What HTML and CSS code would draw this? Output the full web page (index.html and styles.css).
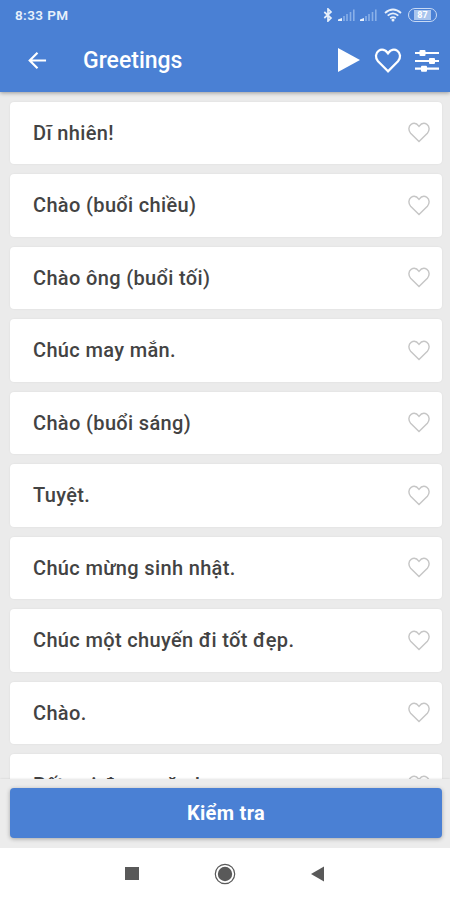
FILE: index.html
```html
<!DOCTYPE html>
<html lang="vi">
<head>
  <meta charset="UTF-8">
  <meta name="viewport" content="width=device-width, initial-scale=1">
  <title>Greetings</title>
  <link rel="stylesheet" href="styles.css">
</head>
<body>

  <svg class="symbols">
    <symbol id="heart" viewBox="0 0 24 22">
      <path d="M12 20.5 L3.2 11.7 C0.6 8.8 0.9 4.4 3.7 2.5 C6.6 0.6 9.8 1.6 12 4.6 C14.2 1.6 17.4 0.6 20.3 2.5 C23.1 4.4 23.4 8.8 20.8 11.7 Z"/>
    </symbol>
    <symbol id="signal" viewBox="0 0 18 14">
      <path d="M0 13 V11.5 L4 10 V13 Z" fill="#e8f0fb"/>
      <path d="M6 13 V8 M9 13 V6 M12.5 13 V4 M15.8 13 V1.5" stroke="#89b0e8" stroke-width="1.6"/>
    </symbol>
  </svg>

  <header class="top">
    <div class="status">
      <span class="time">8:33 PM</span>
      <svg class="bluetooth" viewBox="0 0 10 14"><path d="M1.3 4 L8 10 L5 13 V1 L8 4 L1.3 10"/></svg>
      <svg class="signal"><use href="#signal"/></svg>
      <svg class="signal"><use href="#signal"/></svg>
      <svg class="wifi" viewBox="0 0 18 14">
        <path d="M1 5 Q9 -2 17 5 M3.7 7.7 Q9 3 14.3 7.7 M6.2 10.2 Q9 8 11.8 10.2"/>
        <circle cx="9" cy="12" r="1.5"/>
      </svg>
      <span class="battery"><b>87</b></span>
    </div>
    <nav class="toolbar">
      <svg class="back" viewBox="0 0 20 20"><path d="M19 10 H2 M10 1.8 L1.8 10 L10 18.2"/></svg>
      <h1>Greetings</h1>
      <svg class="play" viewBox="0 0 22 24"><path d="M0 0 L22 12 L0 24 Z"/></svg>
      <svg class="heart"><use href="#heart"/></svg>
      <svg class="sliders" viewBox="0 0 24 22">
        <path d="M0 3 H24 M0 11 H24 M0 18.7 H24"/>
        <rect x="4.5" y="0" width="6" height="6" rx="1"/>
        <rect x="14" y="8" width="6" height="6" rx="1"/>
        <rect x="6" y="15.7" width="6" height="6" rx="1"/>
      </svg>
    </nav>
  </header>

  <main class="list">
    <div class="card"><span>Dĩ nhiên!</span><svg class="like"><use href="#heart"/></svg></div>
    <div class="card"><span>Chào (buổi chiều)</span><svg class="like"><use href="#heart"/></svg></div>
    <div class="card"><span>Chào ông (buổi tối)</span><svg class="like"><use href="#heart"/></svg></div>
    <div class="card"><span>Chúc may mắn.</span><svg class="like"><use href="#heart"/></svg></div>
    <div class="card"><span>Chào (buổi sáng)</span><svg class="like"><use href="#heart"/></svg></div>
    <div class="card"><span>Tuyệt.</span><svg class="like"><use href="#heart"/></svg></div>
    <div class="card"><span>Chúc mừng sinh nhật.</span><svg class="like"><use href="#heart"/></svg></div>
    <div class="card"><span>Chúc một chuyến đi tốt đẹp.</span><svg class="like"><use href="#heart"/></svg></div>
    <div class="card"><span>Chào.</span><svg class="like"><use href="#heart"/></svg></div>
    <div class="card"><span>Rất vui được gặp bạn.</span><svg class="like"><use href="#heart"/></svg></div>
  </main>

  <footer class="bottom">
    <button class="check">Kiểm tra</button>
  </footer>

  <div class="system">
    <svg viewBox="0 0 22 22"><rect x="4" y="4" width="14" height="13"/></svg>
    <svg viewBox="0 0 22 22"><circle class="ring" cx="11" cy="11" r="9.7"/><circle cx="11" cy="11" r="7.2"/></svg>
    <svg viewBox="0 0 22 22"><path d="M4 11 L17 3.5 V18.5 Z"/></svg>
  </div>

</body>
</html>
```

FILE: styles.css
```css
* {
  box-sizing: border-box;
}
body {
  margin: 0;
  height: 900px;
  display: flex;
  flex-direction: column;
  overflow: hidden;
  background: #ebebeb;
  font-family: Roboto, "Noto Sans", sans-serif;
}
.symbols {
  display: none;
}
.top {
  height: 92px;
  flex: none;
  background: #4a80d4;
  color: #fff;
  box-shadow: 0 1px 4px rgba(0, 0, 0, 0.35);
  z-index: 1;
}
.status {
  height: 28px;
  padding: 1px 13px 0 15px;
  display: flex;
  align-items: center;
  color: #e8f0fb;
}
.time {
  flex: 1;
  font-size: 13.5px;
  font-weight: 600;
  letter-spacing: 0.4px;
}
.bluetooth {
  width: 10px;
  height: 14px;
  margin-right: 5px;
  fill: none;
  stroke: #e8f0fb;
  stroke-width: 1.7;
}
.signal {
  width: 18px;
  height: 14px;
  margin-right: 4px;
}
.wifi {
  width: 18px;
  height: 14px;
  margin: 0 6px 0 2px;
  fill: none;
  stroke: #e8f0fb;
  stroke-width: 1.8;
}
.wifi circle {
  fill: #e8f0fb;
  stroke: none;
}
.battery {
  width: 29px;
  height: 14px;
  padding: 1px 5px;
  border: 1.5px solid #c8daf5;
  border-radius: 7px;
  display: flex;
}
.battery b {
  flex: 1;
  background: #a9c5ee;
  color: #fff;
  font-size: 9px;
  line-height: 10px;
  text-align: center;
}
.toolbar {
  height: 64px;
  padding: 0 11px 0 28px;
  display: flex;
  align-items: center;
}
.back {
  width: 19px;
  height: 19px;
  margin-right: 36px;
  fill: none;
  stroke: #fff;
  stroke-width: 2.3;
}
h1 {
  flex: 1;
  margin: 0;
  font-size: 23px;
  font-weight: 500;
}
.play {
  width: 22px;
  height: 24px;
  margin-right: 14px;
  fill: #fff;
}
.heart {
  width: 28px;
  height: 25px;
  margin-right: 13px;
  fill: none;
  stroke: #fff;
  stroke-width: 2;
}
.sliders {
  width: 24px;
  height: 22px;
  margin-top: 2px;
  fill: #fff;
  stroke: #fff;
  stroke-width: 2.2;
}
.sliders rect {
  stroke: none;
}
.list {
  height: 686.5px;
  flex: none;
  padding: 9.5px 8px 0 10px;
  display: flex;
  flex-direction: column;
  gap: 10px;
  overflow: hidden;
}
.card {
  height: 62.5px;
  flex: none;
  padding: 0 11px 0 23px;
  display: flex;
  align-items: center;
  justify-content: space-between;
  background: #fff;
  border-radius: 4px;
  box-shadow: 0 0 2px rgba(0, 0, 0, 0.08);
  color: #434343;
  font-size: 20px;
  font-weight: 500;
  letter-spacing: 0.35px;
}
.like {
  width: 24px;
  height: 21px;
  fill: none;
  stroke: #c6c6c6;
  stroke-width: 1.5;
}
.bottom {
  height: 69px;
  flex: none;
  padding: 9.5px 8px 0 10px;
  background: #ececec;
  box-shadow: 0 0 2px rgba(0, 0, 0, 0.12);
}
.check {
  display: block;
  width: 100%;
  height: 50px;
  border: 0;
  border-radius: 4px;
  background: #4a80d4;
  box-shadow: 0 1px 4px rgba(0, 0, 0, 0.3);
  color: #fff;
  font: 700 20px Roboto, "Noto Sans", sans-serif;
  letter-spacing: 0.3px;
}
.system {
  flex: 1;
  display: flex;
  align-items: center;
  justify-content: center;
  gap: 71px;
  background: #fff;
}
.system svg {
  width: 22px;
  height: 22px;
  fill: #595959;
}
.system .ring {
  fill: none;
  stroke: #595959;
  stroke-width: 1.2;
}
```
